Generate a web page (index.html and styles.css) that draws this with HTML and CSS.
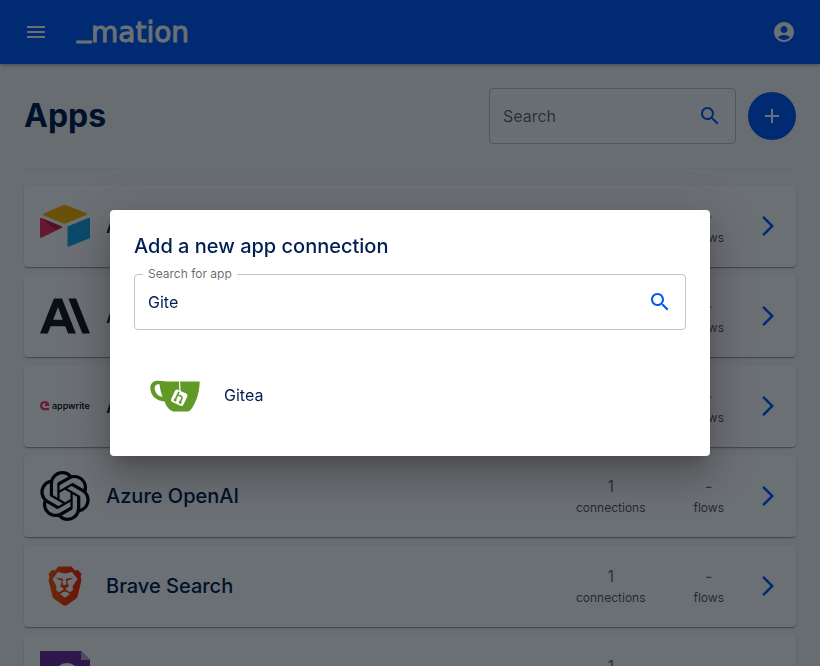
FILE: index.html
```html
<!DOCTYPE html>
<html lang="en">
  <head>
    <meta charset="UTF-8" />
    <meta name="viewport" content="width=device-width, initial-scale=1.0" />
    <title>Apps</title>
    <link rel="stylesheet" href="styles.css">
  </head>
  <body>
    <header class="app-bar">
      <button class="icon-button" aria-label="Open menu">
        <svg class="icon" viewBox="0 0 24 24"><path d="M3 18h18v-2H3v2zm0-5h18v-2H3v2zm0-7v2h18V6H3z" /></svg>
      </button>
      <a class="logo" href="#" aria-label="_mation">
        <svg width="120" height="40" viewBox="0 0 120 40">
          <text x="1" y="30"><tspan dy="-6">_</tspan><tspan dy="6">mation</tspan></text>
        </svg>
      </a>
      <button class="icon-button" aria-label="Account">
        <svg class="icon" viewBox="0 0 24 24"><path d="M12 2C6.48 2 2 6.48 2 12s4.48 10 10 10 10-4.48 10-10S17.52 2 12 2m0 4c1.93 0 3.5 1.57 3.5 3.5S13.93 13 12 13s-3.5-1.57-3.5-3.5S10.07 6 12 6m0 14c-2.03 0-4.43-.82-6.14-2.88C7.55 15.8 9.68 15 12 15s4.45.8 6.14 2.12C16.43 19.18 14.03 20 12 20" /></svg>
      </button>
    </header>

    <main class="container">
      <div class="page-header">
        <h1 class="page-title">Apps</h1>
        <div class="field page-search">
          <input type="text" id="search" placeholder="Search" aria-label="Search" />
          <svg class="icon search-icon" viewBox="0 0 24 24"><path d="M15.5 14h-.79l-.28-.27C15.41 12.59 16 11.11 16 9.5 16 5.91 13.09 3 9.5 3S3 5.91 3 9.5 5.91 16 9.5 16c1.61 0 3.09-.59 4.23-1.57l.27.28v.79l5 4.99L20.49 19zm-6 0C7.01 14 5 11.99 5 9.5S7.01 5 9.5 5 14 7.01 14 9.5 11.99 14 9.5 14" /></svg>
        </div>
        <button class="fab" aria-label="Add connection">
          <svg class="icon" viewBox="0 0 24 24"><path d="M19 13h-6v6h-2v-6H5v-2h6V5h2v6h6z" /></svg>
        </button>
      </div>

      <div class="app-list">
        <a class="card" href="#">
          <svg class="app-icon" viewBox="0 0 50 50">
            <path fill="#fcb400" d="M22 4.500q2.500-1 5 0l19 7.500q2 1 0 2l-19 8q-2.500 1-5 0l-18-7.500q-2.500-1 0-2z" />
            <path fill="#18a8e8" d="M27.500 26.500q0-1 1-1.400L48.500 17q1.500-.5 1.500 1v18q0 1-1 1.500l-20 8q-1.500.5-1.500-1z" />
            <path fill="#f82b60" d="M0 18q0-1.500 1.500-1l20.500 8.500q1 .5 0 1.200l-20 9.800q-2 .8-2-1z" />
            <path fill="#ba1e45" d="M1 17l21 8.700L16 29z" />
          </svg>
          <span class="app-name">Airtable</span>
          <span class="count"><span class="count-value">1</span><span class="count-label">connections</span></span>
          <span class="count"><span class="count-value">-</span><span class="count-label">flows</span></span>
          <svg class="icon arrow" viewBox="0 0 24 24"><path d="M6.230 20.230 8 22l10-10L8 2 6.230 3.770 14.460 12z" /></svg>
        </a>
        <a class="card" href="#">
          <svg class="app-icon" viewBox="0 0 24 24">
            <path fill="#181818" d="M17.304 3.541h-3.672l6.696 16.918H24Zm-10.608 0L0 20.459h3.744l1.370-3.553h7.005l1.369 3.553h3.744L10.536 3.541Zm-.371 10.223 2.291-5.946 2.292 5.946Z" />
          </svg>
          <span class="app-name">Anthropic</span>
          <span class="count"><span class="count-value">1</span><span class="count-label">connections</span></span>
          <span class="count"><span class="count-value">-</span><span class="count-label">flows</span></span>
          <svg class="icon arrow" viewBox="0 0 24 24"><path d="M6.230 20.230 8 22l10-10L8 2 6.230 3.770 14.460 12z" /></svg>
        </a>
        <a class="card" href="#">
          <svg class="app-icon" viewBox="0 0 50 50">
            <path fill="none" stroke="#fd366e" stroke-width="2.200" d="M9 28.200H4.700a3.500 3.500 0 1 1 3.400-4.200H5" />
            <text class="appwrite" x="12" y="28">appwrite</text>
          </svg>
          <span class="app-name">Appwrite</span>
          <span class="count"><span class="count-value">1</span><span class="count-label">connections</span></span>
          <span class="count"><span class="count-value">-</span><span class="count-label">flows</span></span>
          <svg class="icon arrow" viewBox="0 0 24 24"><path d="M6.230 20.230 8 22l10-10L8 2 6.230 3.770 14.460 12z" /></svg>
        </a>
        <a class="card" href="#">
          <svg class="app-icon" viewBox="0 0 24 24">
            <path d="M22.2819 9.8211a5.9847 5.9847 0 0 0-.5157-4.9108 6.0462 6.0462 0 0 0-6.5098-2.9A6.0651 6.0651 0 0 0 4.9807 4.1818a5.9847 5.9847 0 0 0-3.9977 2.9 6.0462 6.0462 0 0 0 .7427 7.0966 5.98 5.98 0 0 0 .511 4.9107 6.051 6.051 0 0 0 6.5146 2.9001A5.9847 5.9847 0 0 0 13.2599 24a6.0557 6.0557 0 0 0 5.7718-4.2058 5.9894 5.9894 0 0 0 3.9977-2.9001 6.0557 6.0557 0 0 0-.7475-7.0729zm-9.022 12.6081a4.4755 4.4755 0 0 1-2.8764-1.0408l.1419-.0804 4.7783-2.7582a.7948.7948 0 0 0 .3927-.6813v-6.7369l2.02 1.1686a.071.071 0 0 1 .038.052v5.5826a4.504 4.504 0 0 1-4.4945 4.4944zm-9.6607-4.1254a4.4708 4.4708 0 0 1-.5346-3.0137l.142.0852 4.783 2.7582a.7712.7712 0 0 0 .7806 0l5.8428-3.3685v2.3324a.0804.0804 0 0 1-.0332.0615L9.74 19.9502a4.4992 4.4992 0 0 1-6.1408-1.6464zM2.3408 7.8956a4.485 4.485 0 0 1 2.3655-1.9728V11.6a.7664.7664 0 0 0 .3879.6765l5.8144 3.3543-2.0201 1.1685a.0757.0757 0 0 1-.071 0l-4.8303-2.7865A4.504 4.504 0 0 1 2.3408 7.872zm16.5963 3.8558L13.1038 8.364 15.1192 7.2a.0757.0757 0 0 1 .071 0l4.8303 2.7913a4.4944 4.4944 0 0 1-.6765 8.1042v-5.6772a.79.79 0 0 0-.407-.667zm2.0107-3.0231l-.142-.0852-4.7735-2.7818a.7759.7759 0 0 0-.7854 0L9.409 9.2297V6.8974a.0662.0662 0 0 1 .0284-.0615l4.8303-2.7866a4.4992 4.4992 0 0 1 6.6802 4.66zM8.3065 12.863l-2.02-1.1638a.0804.0804 0 0 1-.038-.0567V6.0742a4.4992 4.4992 0 0 1 7.3757-3.4537l-.142.0805L8.704 5.459a.7948.7948 0 0 0-.3927.6813zm1.0976-2.3654l2.602-1.4998 2.6069 1.4998v2.9994l-2.5974 1.4997-2.6067-1.4997Z" />
          </svg>
          <span class="app-name">Azure OpenAI</span>
          <span class="count"><span class="count-value">1</span><span class="count-label">connections</span></span>
          <span class="count"><span class="count-value">-</span><span class="count-label">flows</span></span>
          <svg class="icon arrow" viewBox="0 0 24 24"><path d="M6.230 20.230 8 22l10-10L8 2 6.230 3.770 14.460 12z" /></svg>
        </a>
        <a class="card" href="#">
          <svg class="app-icon" viewBox="0 0 50 50">
            <defs>
              <linearGradient id="brave" x1="0" x2="1" y1="0" y2="0">
                <stop offset="0" stop-color="#ff5500" />
                <stop offset="1" stop-color="#ff2000" />
              </linearGradient>
            </defs>
            <path fill="url(#brave)" d="M18.500 5.500h13l3.500 4 3-.5 3.500 4-1 3 1 3-4 16.500q-.5 1.500-2 2.500l-8.500 6q-2 1.500-4 0l-8.500-6q-1.500-1-2-2.500L8.500 19l1-3-1-3 3.500-4 3 .5z" />
            <path fill="#fff" d="M18 11l4 1q3 .8 6 0l4-1 5.500 7-4.500 6.500q-1 1.500 0 3.500 0 2-3.500 3l-1-.5-3.500-2.500 3.500-2.500q.5-1-.5-2.500l-1-3 5-2.300 1-1-6 .8q-1.500.5-1 2l.5 4-2 .5-2-.5.5-4q.5-1.500-1-2l-6-.8 1 1 5 2.300-1 3q-1 1.500-.5 2.500l3.500 2.500-3.500 2.500-1 .5q-3.500-1-3.500-3 1-2 0-3.500L12.500 18z" />
            <path fill="#fff" d="M20 33q3-2.500 5-2.500t5 2.500l-4 3q-1 .8-2 0z" />
          </svg>
          <span class="app-name">Brave Search</span>
          <span class="count"><span class="count-value">1</span><span class="count-label">connections</span></span>
          <span class="count"><span class="count-value">-</span><span class="count-label">flows</span></span>
          <svg class="icon arrow" viewBox="0 0 24 24"><path d="M6.230 20.230 8 22l10-10L8 2 6.230 3.770 14.460 12z" /></svg>
        </a>
        <a class="card" href="#">
          <svg class="app-icon" viewBox="0 0 50 50">
            <path fill="#6f2b9e" d="M0 0h41l9 9v41H0z" />
            <path fill="#c3a5dc" d="M41 0l9 9h-9z" />
            <circle cx="27" cy="25" r="11" fill="none" stroke="#fff" stroke-width="4" />
          </svg>
          <span class="app-name">Carbone</span>
          <span class="count"><span class="count-value">1</span><span class="count-label">connections</span></span>
          <span class="count"><span class="count-value">-</span><span class="count-label">flows</span></span>
          <svg class="icon arrow" viewBox="0 0 24 24"><path d="M6.230 20.230 8 22l10-10L8 2 6.230 3.770 14.460 12z" /></svg>
        </a>
      </div>
    </main>

    <div class="backdrop">
      <div class="dialog" role="dialog" aria-modal="true" aria-labelledby="dialog-title">
        <h2 class="dialog-title" id="dialog-title">Add a new app connection</h2>
        <div class="field">
          <label class="field-label" for="search-app">Search for app</label>
          <input type="text" id="search-app" value="Gite" />
          <svg class="icon search-icon" viewBox="0 0 24 24"><path d="M15.5 14h-.79l-.28-.27C15.41 12.59 16 11.11 16 9.5 16 5.91 13.09 3 9.5 3S3 5.91 3 9.5 5.91 16 9.5 16c1.61 0 3.09-.59 4.23-1.57l.27.28v.79l5 4.99L20.49 19zm-6 0C7.01 14 5 11.99 5 9.5S7.01 5 9.5 5 14 7.01 14 9.5 11.99 14 9.5 14" /></svg>
        </div>
        <div class="results">
          <button class="result">
            <svg class="app-icon" viewBox="0 0 50 50">
              <path fill="#609926" d="M8 10.800q4 0 9 .7h32.700c-.2 8-2 17-6.200 24q-3 6-6 6H23c-4-1.500-7-5-8.300-10C6 31 .3 25 .3 18c0-4.500 3-7.200 7.700-7.200z" />
              <path fill="#fff" d="M9.500 14.300c-4-.3-5.500 2.200-4.500 6 .9 3.700 4 6.200 7.700 6.500-1.800-4-2.700-8-3.200-12.500z" />
              <path stroke="#fff" stroke-width="1.200" fill="none" d="M29.600 11.500l.4 10" />
              <rect x="22.500" y="21" width="13.500" height="13.500" rx="2.200" fill="#fff" transform="rotate(25 29.200 27.700)" />
              <g transform="rotate(25 29.200 27.700)" fill="none" stroke="#609926" stroke-width="1.600">
                <path d="M26.500 22.500v9.500M26.500 26q5.500-1.500 5.500 1.500V32" />
              </g>
              <g fill="#609926" transform="rotate(25 29.200 27.700)">
                <circle cx="26.500" cy="31.500" r="1.400" />
                <circle cx="32" cy="31.500" r="1.400" />
              </g>
            </svg>
            <span>Gitea</span>
          </button>
        </div>
      </div>
    </div>
  </body>
</html>
```
FILE: styles.css
```css
* {
  box-sizing: border-box;
}
body {
  height: 100vh;
  margin: 0;
  overflow: hidden;
  background: #f8f8f8;
  color: #001f52;
  font-family: Inter, "Liberation Sans", sans-serif;
  font-size: 16px;
  line-height: 24px;
}
button,
input {
  padding: 0;
  border: 0;
  background: none;
  color: inherit;
  font: inherit;
}
button {
  cursor: pointer;
}
a {
  color: inherit;
  text-decoration: none;
}
.icon {
  display: block;
  flex: none;
  width: 24px;
  height: 24px;
  fill: currentColor;
}

/* top bar */
.app-bar {
  position: relative;
  display: flex;
  align-items: center;
  height: 64px;
  padding: 0 24px;
  background: #0059f7;
  color: #fff;
  box-shadow: 0 2px 4px -1px rgba(0, 0, 0, 0.2), 0 1px 3px rgba(0, 0, 0, 0.2);
}
.logo {
  flex: 1;
  margin-left: 28px;
}
.logo svg {
  display: block;
  fill: #fff;
  stroke: #fff;
  stroke-width: 1px;
  font-family: "DejaVu Sans", sans-serif;
  font-size: 28px;
}

/* page */
.container {
  padding: 24px;
}
.page-header {
  display: flex;
  align-items: center;
  gap: 12px;
  padding-bottom: 24px;
  border-bottom: 1px solid rgba(0, 0, 0, 0.04);
}
.page-title {
  flex: 1;
  margin: 0;
  font-size: 32px;
  line-height: 40px;
  font-weight: 700;
}
.fab {
  display: flex;
  align-items: center;
  justify-content: center;
  width: 48px;
  height: 48px;
  border-radius: 50%;
  background: #0059f7;
  color: #fff;
}
.field {
  position: relative;
  display: flex;
  align-items: center;
  height: 56px;
  padding: 0 13px;
  border: 1px solid #c4c4c4;
  border-radius: 4px;
  background: #fff;
}
.page-search {
  width: 32%;
  background: #f8faff;
}
.field input {
  flex: 1;
  min-width: 0;
  outline: 0;
}
.field input::placeholder {
  color: rgba(0, 0, 0, 0.6);
  opacity: 1;
}
.field-label {
  position: absolute;
  top: -9px;
  left: 8px;
  padding: 0 5px;
  background: #fff;
  color: rgba(0, 0, 0, 0.6);
  font-size: 12px;
  line-height: 16px;
}
.search-icon {
  color: #0059f7;
}

/* list of connected apps */
.app-list {
  display: flex;
  flex-direction: column;
  gap: 8px;
  padding-top: 16px;
}
.card {
  display: flex;
  align-items: center;
  padding: 16px;
  border-radius: 4px;
  background: #fff;
  box-shadow: 0 2px 1px -1px rgba(0, 0, 0, 0.2), 0 1px 1px rgba(0, 0, 0, 0.14), 0 1px 3px rgba(0, 0, 0, 0.12);
}
.app-icon {
  display: block;
  flex: none;
  width: 50px;
  height: 50px;
}
.appwrite {
  font-size: 9px;
  font-weight: 500;
}
.app-name {
  flex: 1;
  margin-left: 16px;
  font-size: 20px;
  font-weight: 500;
}
.count {
  display: flex;
  flex-direction: column;
  align-items: center;
  margin-left: 48px;
}
.count-value {
  color: rgba(0, 0, 0, 0.6);
}
.count-label {
  color: rgba(0, 8, 30, 0.7);
  font-size: 12px;
  line-height: 20px;
}
.arrow {
  margin-left: 32px;
  color: #0059f7;
}

/* dialog */
.backdrop {
  position: fixed;
  inset: 0;
  display: flex;
  align-items: center;
  justify-content: center;
  background: rgba(0, 9, 16, 0.58);
}
.dialog {
  width: 100%;
  max-width: 600px;
  margin: 32px;
  padding: 24px 24px 0;
  border-radius: 4px;
  background: #fff;
  box-shadow: 0 11px 15px -7px rgba(0, 0, 0, 0.2), 0 24px 38px 3px rgba(0, 0, 0, 0.14), 0 9px 46px 8px rgba(0, 0, 0, 0.12);
}
.dialog-title {
  margin: 0 0 16px;
  font-size: 20px;
  line-height: 24px;
  font-weight: 500;
}
.results {
  padding: 24px 0 20px;
}
.result {
  display: flex;
  align-items: center;
  gap: 24px;
  width: 100%;
  padding: 16px;
}
```
